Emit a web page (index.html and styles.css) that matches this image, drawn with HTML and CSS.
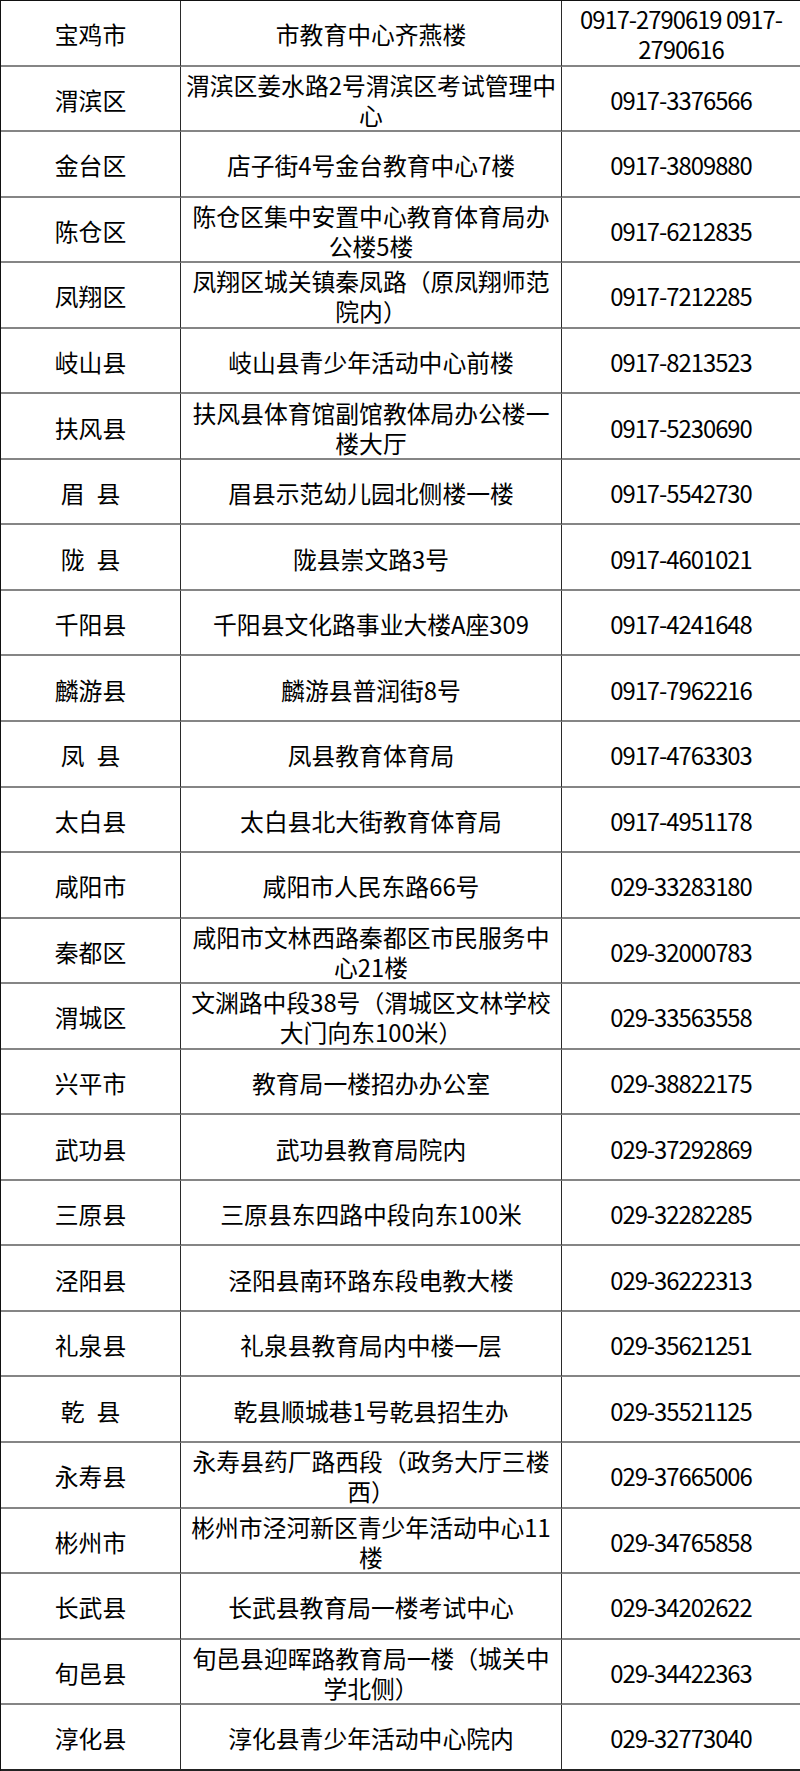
FILE: index.html
```html
<!DOCTYPE html>
<html lang="zh-CN">
<head>
<meta charset="utf-8">
<title>报名点联系方式</title>
<link rel="stylesheet" href="styles.css">
</head>
<body>
<div class="sheet">
  <div class="c n">宝鸡市</div><div class="c a">市教育中心齐燕楼</div><div class="c p">0917-2790619 0917-<br>2790616</div>
  <div class="c n">渭滨区</div><div class="c a">渭滨区姜水路2号渭滨区考试管理中<br>心</div><div class="c p">0917-3376566</div>
  <div class="c n">金台区</div><div class="c a">店子街4号金台教育中心7楼</div><div class="c p">0917-3809880</div>
  <div class="c n">陈仓区</div><div class="c a">陈仓区集中安置中心教育体育局办<br>公楼5楼</div><div class="c p">0917-6212835</div>
  <div class="c n">凤翔区</div><div class="c a">凤翔区城关镇秦凤路（原凤翔师范<br>院内）</div><div class="c p">0917-7212285</div>
  <div class="c n">岐山县</div><div class="c a">岐山县青少年活动中心前楼</div><div class="c p">0917-8213523</div>
  <div class="c n">扶风县</div><div class="c a">扶风县体育馆副馆教体局办公楼一<br>楼大厅</div><div class="c p">0917-5230690</div>
  <div class="c n">眉&ensp;县</div><div class="c a">眉县示范幼儿园北侧楼一楼</div><div class="c p">0917-5542730</div>
  <div class="c n">陇&ensp;县</div><div class="c a">陇县崇文路3号</div><div class="c p">0917-4601021</div>
  <div class="c n">千阳县</div><div class="c a">千阳县文化路事业大楼A座309</div><div class="c p">0917-4241648</div>
  <div class="c n">麟游县</div><div class="c a">麟游县普润街8号</div><div class="c p">0917-7962216</div>
  <div class="c n">凤&ensp;县</div><div class="c a">凤县教育体育局</div><div class="c p">0917-4763303</div>
  <div class="c n">太白县</div><div class="c a">太白县北大街教育体育局</div><div class="c p">0917-4951178</div>
  <div class="c n">咸阳市</div><div class="c a">咸阳市人民东路66号</div><div class="c p">029-33283180</div>
  <div class="c n">秦都区</div><div class="c a">咸阳市文林西路秦都区市民服务中<br>心21楼</div><div class="c p">029-32000783</div>
  <div class="c n">渭城区</div><div class="c a">文渊路中段38号（渭城区文林学校<br>大门向东100米）</div><div class="c p">029-33563558</div>
  <div class="c n">兴平市</div><div class="c a">教育局一楼招办办公室</div><div class="c p">029-38822175</div>
  <div class="c n">武功县</div><div class="c a">武功县教育局院内</div><div class="c p">029-37292869</div>
  <div class="c n">三原县</div><div class="c a">三原县东四路中段向东100米</div><div class="c p">029-32282285</div>
  <div class="c n">泾阳县</div><div class="c a">泾阳县南环路东段电教大楼</div><div class="c p">029-36222313</div>
  <div class="c n">礼泉县</div><div class="c a">礼泉县教育局内中楼一层</div><div class="c p">029-35621251</div>
  <div class="c n">乾&ensp;县</div><div class="c a">乾县顺城巷1号乾县招生办</div><div class="c p">029-35521125</div>
  <div class="c n">永寿县</div><div class="c a">永寿县药厂路西段（政务大厅三楼<br>西）</div><div class="c p">029-37665006</div>
  <div class="c n">彬州市</div><div class="c a">彬州市泾河新区青少年活动中心11<br>楼</div><div class="c p">029-34765858</div>
  <div class="c n">长武县</div><div class="c a">长武县教育局一楼考试中心</div><div class="c p">029-34202622</div>
  <div class="c n">旬邑县</div><div class="c a">旬邑县迎晖路教育局一楼（城关中<br>学北侧）</div><div class="c p">029-34422363</div>
  <div class="c n">淳化县</div><div class="c a">淳化县青少年活动中心院内</div><div class="c p">029-32773040</div>
</div>
</body>
</html>
```
FILE: styles.css
```css
html, body {
  margin: 0;
  padding: 0;
  background: #ffffff;
}

.sheet {
  width: 800px;
  box-sizing: border-box;
  display: grid;
  grid-template-columns: 180px 381px 239px;
  grid-auto-rows: 65.55px;
  border-top: 1px solid #111;
  border-left: 1px solid #111;
  font-family: "Noto Sans CJK SC", "Noto Sans", sans-serif;
  font-size: 23.8px;
  line-height: 30px;
  color: #000;
}

.c {
  box-sizing: border-box;
  display: flex;
  align-items: center;
  justify-content: center;
  text-align: center;
  border-right: 1px solid #2a2a2a;
  border-bottom: 2px solid #858585;
  padding: 3px 2px 0;
}

.p {
  letter-spacing: -1px;
}

.sheet > .c:nth-last-child(-n+3) {
  border-bottom: 2px solid #222;
}
```
